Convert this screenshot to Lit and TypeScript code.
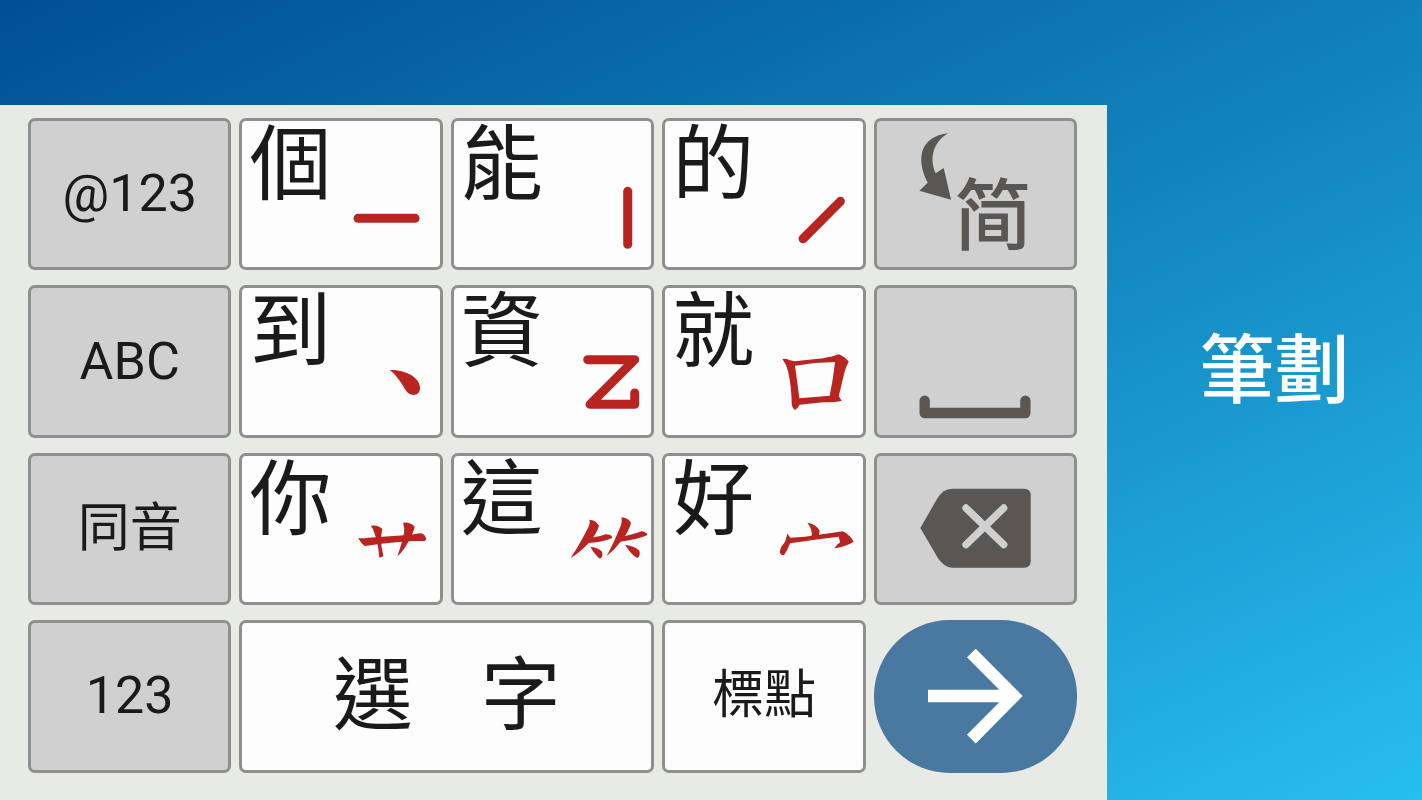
import { LitElement, html, css, svg } from "lit";
import { customElement } from "lit/decorators.js";

interface StrokeKey {
  char: string;
  name: string;
  viewBox: string;
  art: unknown;
}

const row1: StrokeKey[] = [
  {
    char: "個",
    name: "橫",
    viewBox: "727 93 592 439",
    art: svg`<path class="line" d="M1075 385H1246"/>`,
  },
  {
    char: "能",
    name: "豎",
    viewBox: "41 33 592 439",
    art: svg`<path class="line" d="M562 244V403"/>`,
  },
  {
    char: "的",
    name: "撇",
    viewBox: "676 33 592 439",
    art: svg`<path class="line" d="M1202 274L1090 386"/>`,
  },
];

const row2: StrokeKey[] = [
  {
    char: "到",
    name: "點",
    viewBox: "22 25 592 439",
    art: svg`<path class="brush" d="M465 271C505 269 556 290 556 325C556 350 525 352 513 332C503 314 485 285 465 271Z"/>`,
  },
  {
    char: "資",
    name: "折",
    viewBox: "656 25 592 439",
    art: svg`<path class="line" d="M1057 240H1198L1064 374H1198V340"/>`,
  },
  {
    char: "就",
    name: "口部",
    viewBox: "31 25 592 439",
    art: svg`<path class="brush" fill-rule="evenodd" d="M383 238Q395 236 403 241L420 245L505 236Q535 231 552 224Q572 232 582 246Q575 257 570 275L552 350L561 363Q545 368 505 368L435 375Q428 388 421 391Q411 385 411 370Q410 320 400 275Q396 255 383 238ZM421 258L434 356L525 348Q535 300 541 247Q480 248 421 258Z"/>`,
  },
];

const row3: StrokeKey[] = [
  {
    char: "你",
    name: "草部",
    viewBox: "22 31 592 439",
    art: svg`<path class="brush" d="M370 276Q380 280 400 276L530 267Q545 264 556 263Q570 262 575 281L570 286Q500 285 390 301Q378 292 370 276Z"/>
      <path class="brush" d="M408 240Q430 236 443 250Q438 270 440 300L446 332L434 336Q430 290 418 260Q415 248 408 240Z"/>
      <path class="brush" d="M505 231Q525 228 540 243Q535 265 520 290Q505 318 488 332Q502 290 508 262Q510 245 505 231Z"/>`,
  },
  {
    char: "這",
    name: "竹部",
    viewBox: "656 31 592 439",
    art: svg`<path class="brush" d="M1062 222Q1080 222 1091 240Q1085 262 1062 290Q1035 320 1006 337Q1036 290 1055 252Q1066 235 1062 222Z"/>
      <path class="brush" d="M1066 277Q1095 272 1110 266Q1128 266 1131 276Q1110 288 1060 292Z"/>
      <path class="brush" d="M1065 303Q1090 306 1100 318Q1104 333 1094 339Q1080 330 1065 303Z"/>
      <path class="brush" d="M1158 215Q1178 216 1187 232Q1180 258 1160 283Q1140 310 1114 331Q1138 285 1152 250Q1162 232 1158 215Z"/>
      <path class="brush" d="M1165 272Q1200 264 1218 257Q1236 260 1236 268Q1210 280 1155 288Z"/>
      <path class="brush" d="M1169 297Q1200 302 1212 315Q1216 330 1206 337Q1190 330 1169 297Z"/>`,
  },
  {
    char: "好",
    name: "寶蓋",
    viewBox: "31 31 592 439",
    art: svg`<path class="brush" d="M458 231Q485 235 495 256L491 275L470 275Q476 255 458 231Z"/>
      <path class="brush" d="M398 264L407 276L450 273L565 257Q585 268 597 288Q575 302 539 308Q545 298 556 290L552 273L480 282L406 293Q398 315 388 328Q378 330 375 318Q378 302 391 288Z"/>`,
  },
];

@customElement("app-root")
export class AppRoot extends LitElement {
  static styles = css`
    :host {
      display: grid;
      grid-template-columns: minmax(0, 1fr) 315px;
      min-height: 100vh;
      box-sizing: border-box;
      background: linear-gradient(155deg, #004f95, #1387be 52%, #28bef2);
      font-family: Roboto, "Noto Sans CJK TC", sans-serif;
      color: #1a1a1a;
    }
    .board {
      display: grid;
      grid-template-columns: repeat(5, minmax(0, 1fr));
      grid-template-rows: repeat(4, minmax(0, 1fr));
      gap: 15px 8px;
      margin-top: 105px;
      padding: 13px 30px 29px 28px;
      background: #e7eae5;
    }
    .key {
      display: grid;
      grid-template: minmax(0, 1fr) / minmax(0, 1fr);
      place-items: center;
      box-sizing: border-box;
      margin: 0;
      padding: 0;
      border: 3px solid #8f8f8f;
      border-radius: 7px;
      background: #fdfdfd;
      color: inherit;
      font-family: inherit;
      font-size: 52px;
      line-height: 60px;
      cursor: pointer;
    }
    .side {
      background: #d0d0d0;
    }
    .art {
      grid-area: 1 / 1;
      display: block;
      width: 100%;
      height: 100%;
    }
    .char {
      grid-area: 1 / 1;
      place-self: start;
      padding-left: 7px;
      font-size: 82px;
      line-height: 88px;
    }
    .line {
      fill: none;
      stroke: #b8241f;
      stroke-width: 27;
      stroke-linecap: round;
      stroke-linejoin: round;
    }
    .brush {
      fill: #b8241f;
    }
    .dark {
      fill: #595654;
    }
    .bar {
      fill: none;
      stroke: #595654;
      stroke-width: 31;
      stroke-linecap: round;
      stroke-linejoin: round;
    }
    .cross {
      fill: none;
      stroke: #d0d0d0;
      stroke-width: 22;
      stroke-linecap: round;
    }
    .simplified {
      grid-area: 1 / 1;
      place-self: end;
      padding: 0 42px 13px 0;
      font-family: "Noto Sans CJK SC", sans-serif;
      font-size: 78px;
      line-height: 88px;
      font-weight: 500;
      color: #595654;
    }
    .select {
      grid-column: span 2;
      grid-template-columns: auto auto;
      justify-content: center;
      column-gap: 68px;
      font-size: 80px;
      line-height: 88px;
    }
    .enter {
      border: 0;
      border-radius: 76px;
      background: #4979a1;
    }
    .arrow {
      fill: none;
      stroke: #fff;
      stroke-width: 37;
    }
    .title {
      align-self: start;
      margin: 0;
      padding: 315px 0 0 20px;
      text-align: center;
      font-size: 75px;
      line-height: 112px;
      font-weight: 500;
      color: #fff;
    }
  `;

  private strokeKey(key: StrokeKey) {
    return html`<button class="key" type="button" aria-label="${key.char} ${key.name}">
      <span class="char">${key.char}</span>
      <svg class="art" viewBox=${key.viewBox} aria-hidden="true">${key.art}</svg>
    </button>`;
  }

  render() {
    return html`
      <main class="board">
        <button class="key side" type="button">@123</button>
        ${row1.map((k) => this.strokeKey(k))}
        <button class="key side" type="button">
          <svg class="art" viewBox="35 63 592 439" aria-hidden="true">
            <path class="dark" d="M248 100C205 125 190 175 211 220L235 204L257 299L162 272L187 248C150 175 165 110 248 100Z" />
          </svg>
          <span class="simplified">简</span>
        </button>

        <button class="key side" type="button">ABC</button>
        ${row2.map((k) => this.strokeKey(k))}
        <button class="key side" type="button" aria-label="空格">
          <svg class="art" viewBox="665 25 592 439" aria-hidden="true">
            <path class="bar" d="M808 363V400H1110V363" />
          </svg>
        </button>

        <button class="key side" type="button">同音</button>
        ${row3.map((k) => this.strokeKey(k))}
        <button class="key side" type="button" aria-label="刪除">
          <svg class="art" viewBox="665 31 592 439" aria-hidden="true">
            <path class="dark" d="M795 247L845 160Q863 129 890 129H1106Q1126 129 1126 149V346Q1126 366 1106 366H890Q867 366 848 338Z" />
            <path class="cross" d="M932 187L1045 297M1045 187L932 297" />
          </svg>
        </button>

        <button class="key side" type="button">123</button>
        <button class="key select" type="button"><span>選</span><span>字</span></button>
        <button class="key" type="button">標點</button>
        <button class="key enter" type="button" aria-label="輸入">
          <svg class="art" viewBox="656 29 610 457" aria-hidden="true">
            <path class="arrow" d="M818 257H1070M948 128L1076 257L948 386" />
          </svg>
        </button>
      </main>
      <h1 class="title">筆劃</h1>
    `;
  }
}
